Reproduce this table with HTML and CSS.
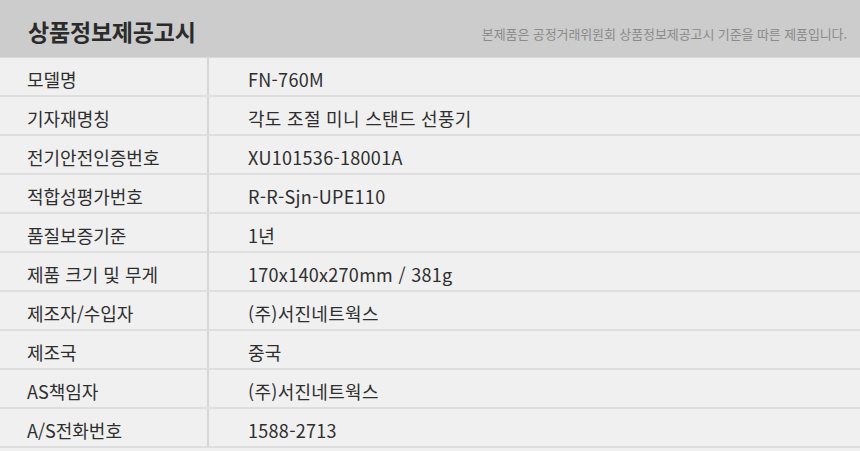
FILE: index.html
```html
<!DOCTYPE html>
<html lang="ko">
<head>
<meta charset="utf-8">
<link rel="stylesheet" href="styles.css">
</head>
<body>
<div class="notice">
  <div class="head">
    <h1 class="title">상품정보제공고시</h1>
    <p class="note">본제품은 공정거래위원회 상품정보제공고시 기준을 따른 제품입니다.</p>
  </div>
  <div class="table">
    <div class="row"><div class="k">모델명</div><div class="v">FN-760M</div></div>
    <div class="row"><div class="k">기자재명칭</div><div class="v">각도 조절 미니 스탠드 선풍기</div></div>
    <div class="row"><div class="k">전기안전인증번호</div><div class="v">XU101536-18001A</div></div>
    <div class="row"><div class="k">적합성평가번호</div><div class="v">R-R-Sjn-UPE110</div></div>
    <div class="row"><div class="k">품질보증기준</div><div class="v">1년</div></div>
    <div class="row"><div class="k">제품 크기 및 무게</div><div class="v">170x140x270mm / 381g</div></div>
    <div class="row"><div class="k">제조자/수입자</div><div class="v">(주)서진네트웍스</div></div>
    <div class="row"><div class="k">제조국</div><div class="v">중국</div></div>
    <div class="row"><div class="k">AS책임자</div><div class="v">(주)서진네트웍스</div></div>
    <div class="row"><div class="k">A/S전화번호</div><div class="v">1588-2713</div></div>
  </div>
</div>
</body>
</html>
```
FILE: styles.css
```css
html, body {
  margin: 0;
  padding: 0;
  background: #f0f0f0;
}
body {
  width: 860px;
  height: 451px;
  overflow: hidden;
  font-family: "Noto Sans CJK KR", "Noto Sans", sans-serif;
  color: #2e2e2e;
}
.head {
  height: 57px;
  background: #cccccc;
  border-bottom: 1px solid #d9d9d9;
  display: flex;
  align-items: center;
  justify-content: space-between;
  padding: 0 13px 0 28px;
}
.title {
  margin: 0;
  font-size: 23px;
  font-weight: 700;
  color: #2b2b2b;
  letter-spacing: -0.2px;
  position: relative;
  top: 2px;
}
.note {
  margin: 0;
  font-size: 13px;
  color: #8a8a8a;
  position: relative;
  top: 5px;
  letter-spacing: -0.1px;
}
.row {
  display: grid;
  grid-template-columns: 207px 2px 1fr;
  height: 39px;
  box-sizing: border-box;
  border-bottom: 2px solid #dedede;
}
.row::before {
  content: "";
  grid-column: 2;
  grid-row: 1;
  background: #d6d6d6;
}
.k, .v {
  grid-row: 1;
  display: flex;
  align-items: center;
  font-size: 18px;
  padding-top: 5px;
}
.k {
  grid-column: 1;
  padding-left: 27px;
}
.v {
  grid-column: 3;
  padding-left: 39px;
  letter-spacing: 0.3px;
}
```
